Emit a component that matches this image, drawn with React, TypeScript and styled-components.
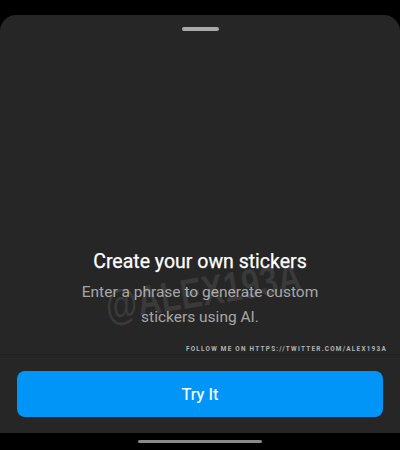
import React from "react";
import styled, { createGlobalStyle } from "styled-components";

const Global = createGlobalStyle`
  html, body { margin: 0; padding: 0; background: #000; }
  body { font-family: Roboto, "Liberation Sans", sans-serif; }
`;

const Page = styled.div`
  width: 400px;
  height: 450px;
  background: #000;
  display: flex;
  flex-direction: column;
  overflow: hidden;
`;

const Sheet = styled.div`
  position: relative;
  margin-top: 15px;
  height: 418px;
  background: #262626;
  border-radius: 16px 16px 0 0;
  display: flex;
  flex-direction: column;
`;

const Handle = styled.div`
  align-self: center;
  margin-top: 12px;
  width: 37px;
  height: 4px;
  border-radius: 2px;
  background: #a9a9a9;
`;

const Content = styled.div`
  flex: 1;
  display: flex;
  flex-direction: column;
  justify-content: flex-end;
  align-items: center;
  text-align: center;
`;

const Title = styled.h1`
  margin: 0;
  font-size: 19.5px;
  line-height: 24px;
  font-weight: 400;
  color: #ffffff;
  -webkit-text-stroke: 0.25px #ffffff;
`;

const Subtitle = styled.p`
  margin: 6px 0 0;
  width: 250px;
  font-size: 15.5px;
  line-height: 25px;
  color: #a6a6a6;
`;

const Credit = styled.div`
  align-self: flex-end;
  margin: 14px 13px 0 0;
  height: 10px;
  line-height: 10px;
  font-size: 6.4px;
  letter-spacing: 1.25px;
  font-weight: 700;
  color: #b4b4b4;
  white-space: nowrap;
`;

const Divider = styled.div`
  height: 1px;
  background: #1f1f1f;
`;

const Footer = styled.div`
  padding: 16px 17px;
`;

const Button = styled.button`
  width: 100%;
  height: 46px;
  border: none;
  border-radius: 8px;
  background: #0095f6;
  color: #ffffff;
  font-family: Roboto, "Liberation Sans", sans-serif;
  font-size: 16.5px;
  font-weight: 400;
  -webkit-text-stroke: 0.2px #ffffff;
`;

const Watermark = styled.div`
  position: absolute;
  left: 108px;
  top: 271px;
  font-family: "Liberation Sans", sans-serif;
  font-weight: 700;
  font-size: 42px;
  line-height: 1;
  color: rgba(255, 255, 255, 0.09);
  transform: rotate(-9deg) scaleX(0.78);
  transform-origin: 0 36px;
  pointer-events: none;
  white-space: nowrap;
`;

const Bottom = styled.div`
  flex: 1;
  display: flex;
  justify-content: center;
  align-items: center;
`;

const HomeIndicator = styled.div`
  width: 124px;
  height: 3px;
  border-radius: 2px;
  background: #8a8a8a;
`;

export default function App() {
  return (
    <Page>
      <Global />
      <Sheet>
        <Handle />
        <Content>
          <Title>Create your own stickers</Title>
          <Subtitle>Enter a phrase to generate custom stickers using AI.</Subtitle>
          <Credit>FOLLOW ME ON HTTPS://TWITTER.COM/ALEX193A</Credit>
        </Content>
        <Divider />
        <Footer>
          <Button>Try It</Button>
        </Footer>
        <Watermark>@ALEX193A</Watermark>
      </Sheet>
      <Bottom>
        <HomeIndicator />
      </Bottom>
    </Page>
  );
}
